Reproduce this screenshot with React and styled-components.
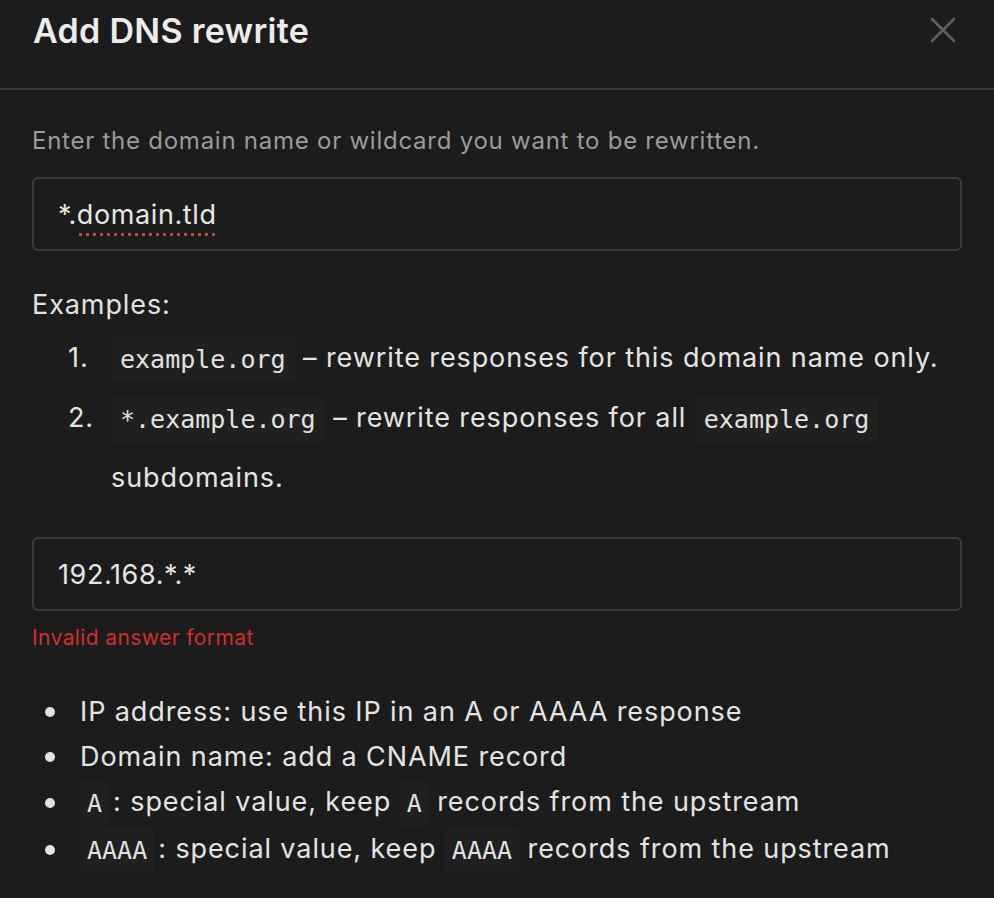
import React from 'react';
import styled, { createGlobalStyle } from 'styled-components';

const GlobalStyle = createGlobalStyle`
  html, body {
    margin: 0;
    padding: 0;
    background: #1c1c1c;
  }
  body {
    font-family: Inter, "Noto Sans", sans-serif;
    color: #e4e4e4;
    -webkit-font-smoothing: antialiased;
  }
`;

const Modal = styled.div`
  width: 994px;
  min-height: 898px;
  background: #1c1c1c;
`;

const Header = styled.div`
  display: flex;
  align-items: center;
  justify-content: space-between;
  height: 60px;
  padding: 0 38px 28px 33px;
  border-bottom: 2px solid #3a3a3a;
`;

const Title = styled.h2`
  margin: 0;
  font-size: 34px;
  font-weight: 600;
  color: #ececec;
  letter-spacing: 0.3px;
`;

const CloseButton = styled.button`
  display: flex;
  padding: 0;
  border: none;
  background: none;
  cursor: pointer;
`;

const Body = styled.div`
  padding: 36px 32px 0;
  font-size: 27px;
  letter-spacing: 0.9px;
`;

const Hint = styled.p`
  margin: 0;
  font-size: 24px;
  line-height: 30px;
  letter-spacing: 0.75px;
  color: #9b9b9b;
`;

const Field = styled.div`
  display: flex;
  align-items: center;
  height: 70px;
  margin-top: ${props => props.top}px;
  padding: 0 24px;
  border: 2px solid #3c3c3c;
  border-radius: 6px;
  color: #e6e6e6;
  letter-spacing: 0.6px;
`;

const Misspelled = styled.span`
  padding-bottom: 6px;
  margin-bottom: -6px;
  background-image: radial-gradient(circle, #c8453b 1.4px, transparent 1.8px);
  background-size: 7px 5px;
  background-repeat: repeat-x;
  background-position: 0 bottom;
`;

const Label = styled.div`
  margin-top: 36px;
  line-height: 36px;
  color: #e2e2e2;
`;

const OrderedList = styled.ol`
  list-style: none;
  margin: 5px 0 0;
  padding: 0 0 0 36px;
  line-height: 60px;
`;

const OrderedItem = styled.li`
  display: flex;
`;

const Num = styled.span`
  flex: 0 0 43px;
`;

const Code = styled.code`
  display: inline-block;
  padding: 0 ${props => props.pad || 9}px;
  margin-right: ${props => props.gap || 0}px;
  line-height: 45px;
  border-radius: 4px;
  background: #202020;
  font-family: "DejaVu Sans Mono", "Liberation Mono", monospace;
  font-size: 25px;
  letter-spacing: 0;
  color: #e2e2e2;
  vertical-align: middle;
`;

const ErrorText = styled.div`
  margin-top: 13px;
  font-size: 21px;
  line-height: 28px;
  letter-spacing: 0.4px;
  color: #d02f2f;
`;

const BulletList = styled.ul`
  list-style: none;
  margin: 37px 0 0;
  padding: 0 0 0 13px;
  line-height: 45px;
`;

const BulletItem = styled.li`
  display: flex;
  align-items: center;
`;

const Dot = styled.span`
  flex: 0 0 10px;
  height: 10px;
  margin-right: 25px;
  border-radius: 50%;
  background: #e2e2e2;
`;

const CloseIcon = () => (
  <svg width="26" height="26" viewBox="0 0 26 26">
    <path d="M2 2 L24 24 M24 2 L2 24" stroke="#5f5f5f" strokeWidth="2.6" strokeLinecap="round" />
  </svg>
);

export default function App() {
  return (
    <>
      <GlobalStyle />
      <Modal>
        <Header>
          <Title>Add DNS rewrite</Title>
          <CloseButton aria-label="Close">
            <CloseIcon />
          </CloseButton>
        </Header>
        <Body>
          <Hint>Enter the domain name or wildcard you want to be rewritten.</Hint>
          <Field top={21}>
            *.<Misspelled>domain.tld</Misspelled>
          </Field>
          <Label>Examples:</Label>
          <OrderedList>
            <OrderedItem>
              <Num>1.</Num>
              <span>
                <Code>example.org</Code> – rewrite responses for this domain name only.
              </span>
            </OrderedItem>
            <OrderedItem>
              <Num>2.</Num>
              <span>
                <Code>*.example.org</Code> – rewrite responses for all <Code>example.org</Code> subdomains.
              </span>
            </OrderedItem>
          </OrderedList>
          <Field top={29}>192.168.*.*</Field>
          <ErrorText>Invalid answer format</ErrorText>
          <BulletList>
            <BulletItem>
              <Dot />
              <span>IP address: use this IP in an A or AAAA response</span>
            </BulletItem>
            <BulletItem>
              <Dot />
              <span>Domain name: add a CNAME record</span>
            </BulletItem>
            <BulletItem>
              <Dot />
              <span>
                <Code pad={7} gap={4}>A</Code>: special value, keep <Code pad={7}>A</Code> records from the upstream
              </span>
            </BulletItem>
            <BulletItem>
              <Dot />
              <span>
                <Code pad={7} gap={4}>AAAA</Code>: special value, keep <Code pad={7}>AAAA</Code> records from the upstream
              </span>
            </BulletItem>
          </BulletList>
        </Body>
      </Modal>
    </>
  );
}
